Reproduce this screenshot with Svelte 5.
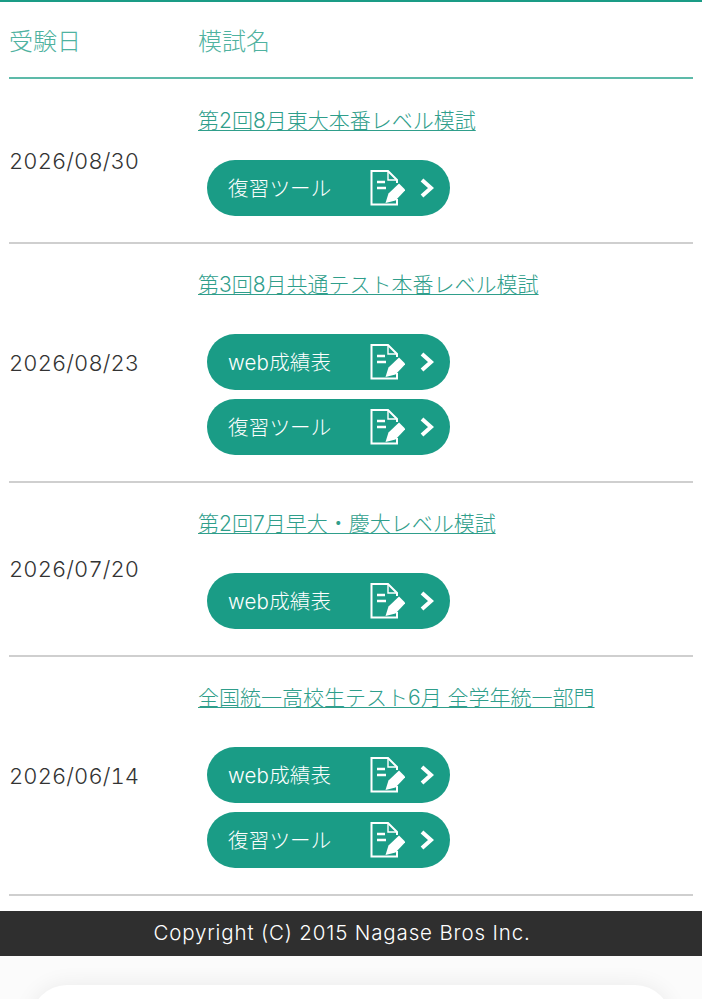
<script lang="ts">
  const WEB = 'web成績表';
  const TOOL = '復習ツール';

  const exams = [
    { date: '2026/08/30', title: '第2回8月東大本番レベル模試', links: [TOOL], tight: true },
    { date: '2026/08/23', title: '第3回8月共通テスト本番レベル模試', links: [WEB, TOOL] },
    { date: '2026/07/20', title: '第2回7月早大・慶大レベル模試', links: [WEB] },
    { date: '2026/06/14', title: '全国統一高校生テスト6月 全学年統一部門', links: [WEB, TOOL] },
  ];
</script>

<div class="page">
  <div class="list">
    <div class="head">
      <div class="date-col">受験日</div>
      <div>模試名</div>
    </div>

    {#each exams as exam}
      <div class="row" class:tight={exam.tight}>
        <div class="date-col date">{exam.date}</div>
        <div class="detail">
          <a class="title" href="#top">{exam.title}</a>
          <div class="buttons">
            {#each exam.links as label}
              <a class="btn" href="#top">
                <span class="label">{label}</span>
                <svg class="doc" viewBox="0 0 35 36" width="35" height="36" fill="none" stroke="#fff">
                  <path d="M27 13V10L18 1H1.5V34.5H27V29" stroke-width="2" />
                  <path d="M18 1V10H27" stroke-width="1.4" />
                  <path d="M7 12H15M7 18H16" stroke-width="2.4" />
                  <path d="M15.5 33L18.5 23.5L29 13.5L35.5 20L25.5 30.5Z" fill="#fff" stroke="none" />
                </svg>
                <svg class="chev" viewBox="0 0 14 20" width="14" height="20" fill="none" stroke="#fff">
                  <path d="M2 2L11 10L2 18" stroke-width="4" />
                </svg>
              </a>
            {/each}
          </div>
        </div>
      </div>
    {/each}
  </div>

  <footer class="copy">Copyright (C) 2015 Nagase Bros Inc.</footer>

  <div class="below">
    <div class="card"></div>
  </div>
</div>

<style>
  :global(body) {
    margin: 0;
    background: #fff;
  }

  .page {
    height: 999px;
    overflow: hidden;
    border-top: 2px solid #1a9c86;
    box-sizing: border-box;
    font-family: Inter, "Noto Sans CJK JP", sans-serif;
    font-weight: 300;
    color: #333;
  }

  .list {
    padding: 0 9px;
  }

  .head {
    display: flex;
    align-items: center;
    height: 77px;
    border-bottom: 2px solid #5dbaa9;
    box-sizing: border-box;
    color: #4fb2a0;
    font-size: 24px;
  }

  .date-col {
    width: 189px;
    flex-shrink: 0;
  }

  .row {
    display: flex;
    align-items: center;
    border-bottom: 2px solid #cfcfcf;
    padding: 28px 0 26px;
  }

  .row.tight {
    padding-top: 29px;
  }

  .date {
    font-size: 22px;
    letter-spacing: 0.1px;
    font-variant-numeric: tabular-nums;
    color: #333;
    padding-bottom: 2px;
  }

  .detail {
    flex: 1;
  }

  .title {
    display: block;
    font-size: 21px;
    line-height: 26px;
    color: #2f9e8b;
    text-decoration: underline;
    text-underline-offset: 2px;
    text-decoration-thickness: 1px;
  }

  .buttons {
    display: flex;
    flex-direction: column;
    gap: 9px;
    margin: 36px 0 0 9px;
  }

  .tight .buttons {
    margin-top: 26px;
  }

  .btn {
    display: flex;
    align-items: center;
    width: 243px;
    height: 56px;
    border-radius: 28px;
    background: #1a9c86;
    color: #fff;
    text-decoration: none;
    font-size: 20.5px;
    box-sizing: border-box;
    padding: 0 16px 0 21px;
  }

  .label {
    flex: 1;
    white-space: nowrap;
    padding-bottom: 2px;
    letter-spacing: 0.2px;
  }

  .doc {
    margin-right: 15px;
  }

  .copy {
    margin-top: 15px;
    height: 45px;
    line-height: 44px;
    background: #2f2f2f;
    color: #fff;
    text-align: center;
    font-size: 20.5px;
    letter-spacing: 0.85px;
    padding-right: 18px;
    box-sizing: border-box;
  }

  .below {
    height: 43px;
    background: #fbfbfb;
    padding: 29px 31px 0;
    box-sizing: border-box;
  }

  .card {
    height: 40px;
    background: #fff;
    border-radius: 36px 36px 0 0;
    box-shadow: 0 0 22px rgba(0, 0, 0, 0.07);
  }
</style>
